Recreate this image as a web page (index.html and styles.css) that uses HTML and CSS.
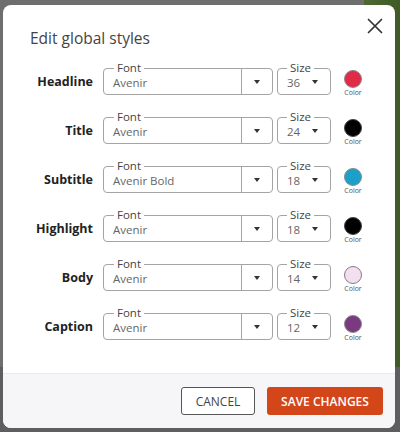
FILE: index.html
```html
<!DOCTYPE html>
<html>
<head>
<meta charset="utf-8">
<link rel="stylesheet" href="styles.css">
</head>
<body>
<div class="modal">
  <button class="close" aria-label="Close">
    <svg width="16" height="16" viewBox="0 0 16 16"><path d="M1.5 1.5 L14.5 14.5 M14.5 1.5 L1.5 14.5" stroke="#333" stroke-width="1.7" stroke-linecap="round" fill="none"/></svg>
  </button>
  <div class="content">
    <h1 class="title">Edit global styles</h1>
    <div class="rows">
      <div class="row">
        <div class="label">Headline</div>
        <div class="field font"><span class="legend">Font</span><span class="value">Avenir</span><span class="drop"><i class="arrow"></i></span></div>
        <div class="field size"><span class="legend">Size</span><span class="value">36</span><i class="arrow"></i></div>
        <div class="color"><span class="dot c-red"></span><span class="clabel">Color</span></div>
      </div>
      <div class="row">
        <div class="label">Title</div>
        <div class="field font"><span class="legend">Font</span><span class="value">Avenir</span><span class="drop"><i class="arrow"></i></span></div>
        <div class="field size"><span class="legend">Size</span><span class="value">24</span><i class="arrow"></i></div>
        <div class="color"><span class="dot c-black"></span><span class="clabel">Color</span></div>
      </div>
      <div class="row">
        <div class="label">Subtitle</div>
        <div class="field font"><span class="legend">Font</span><span class="value">Avenir Bold</span><span class="drop"><i class="arrow"></i></span></div>
        <div class="field size"><span class="legend">Size</span><span class="value">18</span><i class="arrow"></i></div>
        <div class="color"><span class="dot c-teal"></span><span class="clabel">Color</span></div>
      </div>
      <div class="row">
        <div class="label">Highlight</div>
        <div class="field font"><span class="legend">Font</span><span class="value">Avenir</span><span class="drop"><i class="arrow"></i></span></div>
        <div class="field size"><span class="legend">Size</span><span class="value">18</span><i class="arrow"></i></div>
        <div class="color"><span class="dot c-black"></span><span class="clabel">Color</span></div>
      </div>
      <div class="row">
        <div class="label">Body</div>
        <div class="field font"><span class="legend">Font</span><span class="value">Avenir</span><span class="drop"><i class="arrow"></i></span></div>
        <div class="field size"><span class="legend">Size</span><span class="value">14</span><i class="arrow"></i></div>
        <div class="color"><span class="dot c-pink"></span><span class="clabel">Color</span></div>
      </div>
      <div class="row">
        <div class="label">Caption</div>
        <div class="field font"><span class="legend">Font</span><span class="value">Avenir</span><span class="drop"><i class="arrow"></i></span></div>
        <div class="field size"><span class="legend">Size</span><span class="value">12</span><i class="arrow"></i></div>
        <div class="color"><span class="dot c-purple"></span><span class="clabel">Color</span></div>
      </div>
    </div>
  </div>
  <div class="footer">
    <button class="btn cancel">CANCEL</button>
    <button class="btn save">SAVE CHANGES</button>
  </div>
</div>
</body>
</html>
```
FILE: styles.css
```css
html, body {
  margin: 0;
  padding: 0;
}
body {
  width: 400px;
  height: 432px;
  overflow: hidden;
  font-family: "Open Sans", "DejaVu Sans", sans-serif;
  background:
    linear-gradient(to bottom, rgba(0,0,0,0) 85%, #5e5e5e 85%),
    linear-gradient(to right, #6e6e6e 0, #6e6e6e 91%, #4c6a30 91%, #3f5a26 100%);
  display: flex;
  padding: 5px 5px 4px 3px;
  box-sizing: border-box;
}
.modal {
  position: relative;
  width: 392px;
  height: 423px;
  background: #fff;
  border-radius: 8px;
  overflow: hidden;
  display: flex;
  flex-direction: column;
}
.close {
  position: absolute;
  top: 11px;
  right: 10px;
  width: 20px;
  height: 20px;
  padding: 0;
  border: 0;
  background: none;
  display: flex;
  align-items: center;
  justify-content: center;
}
.content {
  flex: 1;
  padding: 23px 0 0 27px;
}
.title {
  margin: 0;
  font-size: 15.5px;
  line-height: 20px;
  font-weight: 400;
  color: #444;
}
.rows {
  margin-top: 20px;
  display: flex;
  flex-direction: column;
  gap: 22px;
}
.row {
  display: flex;
  align-items: center;
  height: 27px;
}
.label {
  width: 63px;
  text-align: right;
  font-size: 12.5px;
  font-weight: 700;
  color: #222;
  margin-right: 10px;
  white-space: nowrap;
}
.field {
  position: relative;
  box-sizing: border-box;
  height: 27px;
  border: 1px solid #a4a4a4;
  border-radius: 4px;
  display: flex;
  align-items: center;
}
.font {
  width: 170px;
  margin-right: 4px;
}
.size {
  width: 54px;
  padding: 0 12px 0 9px;
  justify-content: space-between;
}
.legend {
  position: absolute;
  top: -8px;
  left: 10px;
  padding: 0 3px;
  background: #fff;
  font-size: 11.5px;
  line-height: 13px;
  color: #444;
}
.size .legend {
  left: 9px;
}
.value {
  font-size: 11.5px;
  color: #666;
  padding-top: 1px;
}
.font .value {
  flex: 1;
  padding-left: 9px;
}
.drop {
  width: 30px;
  height: 100%;
  border-left: 1px solid #a4a4a4;
  display: flex;
  align-items: center;
  justify-content: center;
}
.arrow {
  width: 0;
  height: 0;
  border-left: 3.5px solid transparent;
  border-right: 3.5px solid transparent;
  border-top: 4px solid #333;
}
.color {
  width: 24px;
  margin-left: 10px;
  display: flex;
  flex-direction: column;
  align-items: center;
  padding-top: 4px;
}
.dot {
  box-sizing: border-box;
  width: 18px;
  height: 18px;
  border-radius: 50%;
  border: 1px solid #8a8a8a;
}
.clabel {
  font-size: 7px;
  line-height: 9px;
  color: #555;
}
.c-red { background: #e02a48; }
.c-black { background: #000; border-color: #444; }
.c-teal { background: #1ba0c9; }
.c-pink { background: #f3e0ee; border-color: #8c7a88; }
.c-purple { background: #7a3a80; }
.footer {
  height: 55px;
  box-sizing: border-box;
  border-top: 1px solid #e9e9ec;
  background: #f6f6f8;
  display: flex;
  justify-content: flex-end;
  align-items: center;
  gap: 12px;
  padding: 0 12px 0 0;
}
.btn {
  height: 28px;
  border-radius: 3px;
  font-family: "Open Sans", "DejaVu Sans", sans-serif;
  font-size: 12px;
  font-weight: 600;
  padding: 0;
  box-sizing: border-box;
}
.cancel {
  width: 74px;
  background: #fff;
  border: 1px solid #555;
  color: #444;
  font-weight: 500;
}
.save {
  width: 116px;
  background: #d3461a;
  border: 0;
  color: #fff;
}
```
